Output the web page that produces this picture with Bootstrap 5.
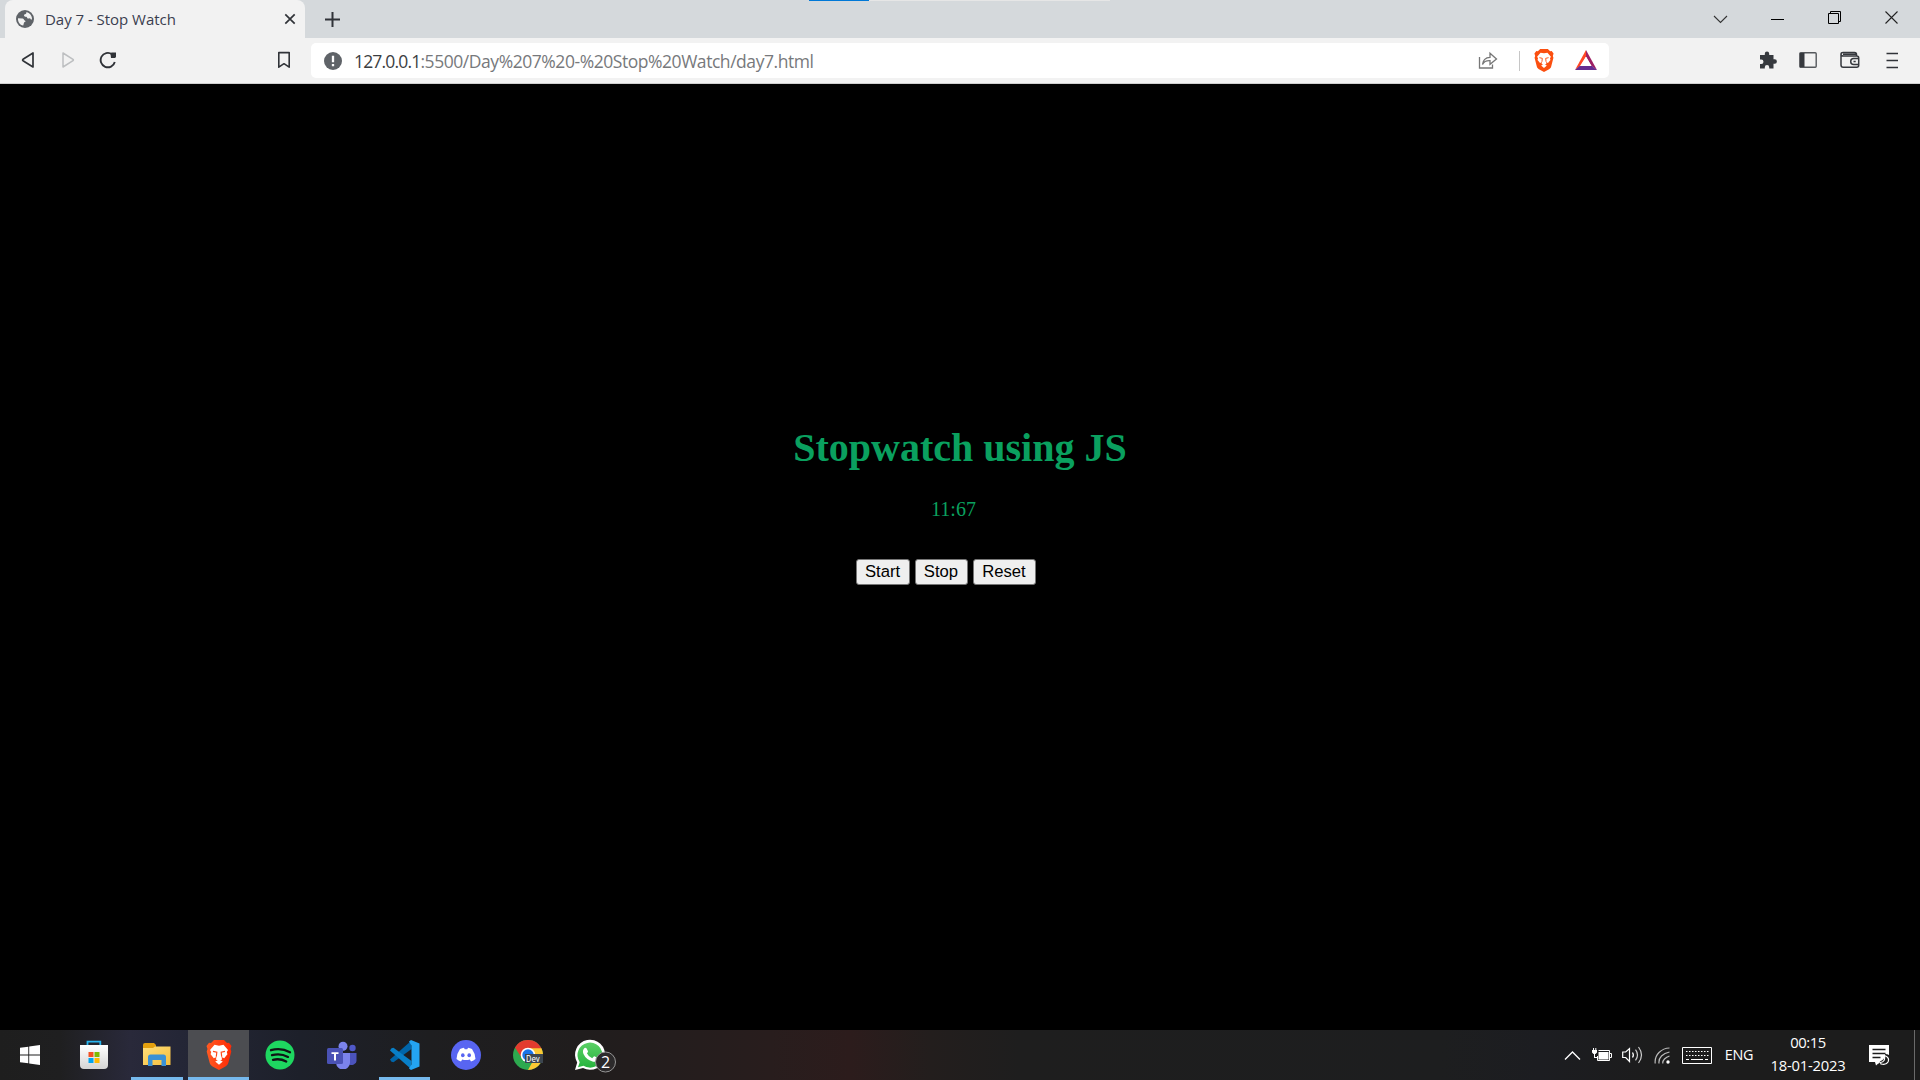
<!DOCTYPE html>
<html lang="en">
<head>
<meta charset="utf-8">
<title>Day 7 - Stop Watch</title>
<link href="https://cdn.jsdelivr.net/npm/bootstrap@5.3.0/dist/css/bootstrap.min.css" rel="stylesheet">
<style>
body{width:1920px;height:1080px;overflow:hidden;background:#000;font-family:"Open Sans","Noto Sans",sans-serif}
svg{display:block;flex:none}
.cell{display:flex;align-items:center;justify-content:center;flex:none;height:100%}
.w30{width:30px}.w40{width:40px}.w41{width:41px}.w42{width:42px}.w44{width:44px}.w50{width:50px}.w57{width:57px}.w62{width:62px}.w94{width:94px}
.tabstrip{height:38px;background:#d5d9dc}
.tab{width:300px;height:38px;margin-left:5px;border-radius:8px 8px 0 0;background:#f2f2f2;padding:0 9px 0 11px}
.tab-title{font-size:15px;color:#3b3e4f;letter-spacing:-.03px;line-height:37px;margin-left:11px;white-space:nowrap}
.loadbar{left:809px;top:0;width:301px;height:1px;background:#e6e6e6}
.loadbar div{width:60px;height:1px;background:#0078d7}
.toolbar{height:46px;background:#f2f2f2;border-bottom:1px solid #d0d0d0}
.toolbar>div>.cell{padding-bottom:1px}
.nav-left{width:304px;padding-left:8px}
.address{width:1298px;height:35px;margin:5px 0 0 7px;background:#fff;border-radius:5px;padding:0 2px 0 13px}
.url{font-size:17.500px;letter-spacing:-.45px;color:#77797c;margin-left:12px;line-height:34px}
.url span{color:#3b3e42;letter-spacing:-.82px}
.sep{width:1px;height:20px;background:#c6c6c6;margin:0 3px 0 12px}
.page{height:946px;background:#000;font-family:"Liberation Serif",serif;color:#0aa05f;padding-top:341px}
.page h1{font-size:40px;font-weight:700;line-height:46px}
.time{font-size:20px;line-height:23px;margin:27px 13px 0 0}
.btns{gap:5px;margin:38px 29px 0 0}
.btns button{height:26px;width:54px;border:1px solid #767676;border-radius:3px;background:#efefef;color:#000;font:16.67px/22px "Liberation Sans",sans-serif;padding:1px 0}
.btns button:nth-child(2){width:53px}
.btns button:last-child{width:63px}
.taskbar{height:50px;color:#fff;background:linear-gradient(90deg,#1e1e1e 0,#1f1f20 60px,#29293a 130px,#242636 180px,#1d202a 300px,#1e1e20 430px,#201d1d 580px,#281d1d 770px,#2c1c1c 850px,#231e1d 930px,#1e1e1e 1020px,#1d1e1f 1440px,#1c1d21 1540px,#1c1c1c 1660px)}
.open{position:relative}
.open::after{content:"";position:absolute;left:6px;right:5px;bottom:0;height:3px;background:#76b9ed}
.active{background:#4c4d51;width:61px}
.active::after{left:0;right:0}
.lang{font-size:14.4px;letter-spacing:-.3px}
.clock{font-size:14.8px;line-height:23px;text-align:center;letter-spacing:-.2px;padding-bottom:2px}
.clock .hr-time{letter-spacing:-.4px}
.desk{width:1px;height:50px;background:#6a6a6a;margin:0 5px 0 9px}
</style>
<script src="https://cdn.jsdelivr.net/npm/bootstrap@5.3.0/dist/js/bootstrap.bundle.min.js"></script>
</head>
<body class="d-flex flex-column m-0">
<svg width="0" height="0" class="position-absolute">
<defs>
<linearGradient id="bg" x1="0" x2="1"><stop offset="0" stop-color="#ff5a22"/><stop offset="1" stop-color="#ff2a05"/></linearGradient>
<linearGradient id="fold" x1="0" y1="0" x2="1" y2="1"><stop offset="0" stop-color="#ffdf7a"/><stop offset="1" stop-color="#f5bd3c"/></linearGradient>
<linearGradient id="sb" x2="0" y2="1"><stop offset="0" stop-color="#fff"/><stop offset="1" stop-color="#d4d4d4"/></linearGradient>
<linearGradient id="wa" x2="0" y2="1"><stop offset="0" stop-color="#5bd066"/><stop offset="1" stop-color="#27b43e"/></linearGradient>
<symbol id="lion" viewBox="0 0 26 30">
<path d="M8 0h10l3 3 2-.3L25.500 6l-1 3 .8 2.500-3 11.500c-.6 1.800-1.600 2.600-3.300 3.700L13 30l-6-3.300C5.300 25.600 4.300 24.800 3.700 23L.7 11.500 1.500 9 .5 6 3 2.700 5 3z"/>
<path fill="#fff" d="M8.500 4.800l4.500.9 4.500-.9 4.500 5.200-1.200 2 .6 2.300-3.200 3.900-2.700-1.200.6 2.500-3.100 1.500-3.100-1.500.6-2.500-2.700 1.200-3.200-3.900.6-2.300L4 10zM13 19.800l3.800 1.700-3.800 3.200-3.800-3.200z"/>
<path fill="none" stroke="currentColor" stroke-width="1.200" d="M7 11.300l3.800.9-.5 4.500M19 11.300l-3.800.9.5 4.500"/>
</symbol>
</defs>
</svg>

<header class="tabstrip d-flex">
  <div class="tab d-flex align-items-center">
    <svg width="18" height="18" viewBox="0 0 18 18"><circle cx="9" cy="9" r="9" fill="#5f6368"/><path fill="#f2f2f2" d="M2 8.200l4.800.3c1.500.4 1 2 2.300 2.300.8.300.5 1.200-.5 1.300-.9.300-.6 2-1.400 3.500C3.800 14.800 1.700 11.800 2 8.200zM10.500 2l-.3 1.600c-.5 1.200-2 .5-2.200 1.700-.1 1 1 1.700 2.300 1.500.9 0 .5 1.500 1.700 1.800 1 .1 1.300-.6 2-.3.8.5.5 1.500 1.500 1.300.4-.1.500-.4.500-.8 0-3.200-2.300-6-5.500-6.800z"/></svg>
    <span class="tab-title">Day 7 - Stop Watch</span>
    <svg class="ms-auto" width="12" height="12" viewBox="0 0 12 12"><path d="M1.300 1.300l9.400 9.400M10.700 1.300L1.300 10.700" stroke="#303338" stroke-width="1.700"/></svg>
  </div>
  <div class="cell" style="width:55px"><svg width="15" height="15" viewBox="0 0 15 15"><path d="M7.500 0v15M0 7.500h15" stroke="#303338" stroke-width="2"/></svg></div>
  <div class="d-flex ms-auto">
    <div class="cell w57"><svg width="15" height="9" viewBox="0 0 15 9"><path d="M1 1l6.500 6.500L14 1" fill="none" stroke="#333" stroke-width="1.100"/></svg></div>
    <div class="cell w57"><svg width="13" height="1"><path d="M0 .5h13" stroke="#000"/></svg></div>
    <div class="cell w57 pb-1"><svg width="13" height="13" viewBox="0 0 13 13"><path d="M.5 2.500h10v10H.5zM2.500 2.500v-2h10v10h-2" fill="none" stroke="#000"/></svg></div>
    <div class="cell w57 pb-1"><svg width="13" height="13" viewBox="0 0 13 13"><path d="M.5.5l12 12M12.500.5l-12 12" stroke="#222" stroke-width="1.100"/></svg></div>
  </div>
</header>
<div class="loadbar position-absolute"><div></div></div>

<nav class="toolbar d-flex">
  <div class="nav-left d-flex">
    <div class="cell w40"><svg width="14" height="18" viewBox="0 0 14 18"><path d="M12 2v14L2 9.700Q1.200 9 2 8.300z" fill="none" stroke="#303338" stroke-width="1.700" stroke-linejoin="round"/></svg></div>
    <div class="cell w40"><svg width="14" height="18" viewBox="0 0 14 18"><path d="M2 2v14l10-6.300q.8-.7 0-1.400z" fill="none" stroke="#bdbfc1" stroke-width="1.500" stroke-linejoin="round"/></svg></div>
    <div class="cell w40"><svg width="18" height="18" viewBox="0 0 18 18"><path d="M13 3.200A7.200 7.200 0 1 0 15.800 11" fill="none" stroke="#303338" stroke-width="1.900"/><path d="M11.500 2.500l1-1h4.500v4.500l-1 1h-4z" fill="#303338"/></svg></div>
    <div class="cell w40 ms-auto"><svg width="14" height="18" viewBox="0 0 14 18"><path d="M1.800 1.600h10.400v14.600L7 12.700l-5.200 3.500z" fill="none" stroke="#303338" stroke-width="1.600" stroke-linejoin="round"/></svg></div>
  </div>
  <div class="address d-flex align-items-center">
    <svg width="18" height="18" viewBox="0 0 18 18"><circle cx="9" cy="9" r="9" fill="#5f6368"/><path d="M9 3.800v6.400M9 12v2.300" stroke="#fff" stroke-width="2.300"/></svg>
    <div class="url text-nowrap"><span>127.0.0.1</span>:5500/Day%207%20-%20Stop%20Watch/day7.html</div>
    <div class="cell w41 ms-auto"><svg width="20" height="18" viewBox="0 0 20 18"><path d="M1.500 6v11h13v-3.500M4.500 13.500C5 8.500 8 6.500 12 6.300V2.200L18.500 8 12 13.300V9.700C8.500 9.500 6 10.500 4.500 13.500z" fill="none" stroke="#777" stroke-width="1.300"/></svg></div>
    <div class="sep" style="margin-left:11px"></div>
    <div class="cell w42"><svg width="20" height="23" viewBox="0 0 20 23" fill="#fb4f10" color="#fb4f10"><use href="#lion" width="20" height="23"/></svg></div>
    <div class="cell w42"><svg width="22" height="20" viewBox="0 0 22 20"><path fill="#ff4724" d="M11 0v6.500L5 16 0 20z"/><path fill="#9e1f63" d="M11 0l11 20-5.500-4L11 6.500z"/><path fill="#662d91" d="M0 20l4.500-4h12.500l5 4z"/><path fill="#fff" d="M11 6.800L5.600 16h10.800z"/></svg></div>
  </div>
  <div class="d-flex ms-auto pe-2">
    <div class="cell w40"><svg width="18" height="18" viewBox="0 0 18 18"><path fill="#36393e" d="M1 4h4.800V2.700a2.200 2.200 0 0 1 4.400 0V4H14.500v4.300h1.200a2.200 2.200 0 0 1 0 4.400h-1.200V17.500h-4.300v-1.300a2.200 2.200 0 0 0-4.400 0v1.300H1v-4.600h1.300a2.200 2.200 0 0 0 0-4.400H1z"/></svg></div>
    <div class="cell w40"><svg width="18" height="16" viewBox="0 0 18 16"><rect x=".8" y=".8" width="16.400" height="14.400" rx="1" fill="none" stroke="#55585c" stroke-width="1.400"/><path d="M1 1h4.500v14H1z" fill="#36393e"/></svg></div>
    <div class="cell w44"><svg width="20" height="18" viewBox="0 0 20 18"><path d="M1 3v11q0 2.300 2.300 2.300h13.400q2 0 2-2V7q0-2-2-2H3.500Q1 5 1 3.200 1 1.500 3 1.500h11.500q2 0 2 2V5M3 3.300h13M18.700 7.500h-5a3 3 0 0 0 0 6h5zM13.500 10.500h2.200" fill="none" stroke="#36393e" stroke-width="1.500"/></svg></div>
    <div class="cell w40"><svg width="12" height="17" viewBox="0 0 12 17"><path d="M.5 1.500H12M.5 8.500H12M.5 15.500H12" stroke="#303338" stroke-width="1.700"/></svg></div>
  </div>
</nav>

<main class="page d-flex flex-column align-items-center">
  <h1 class="m-0">Stopwatch using JS</h1>
  <div class="time">11:67</div>
  <div class="btns d-flex"><button>Start</button><button>Stop</button><button>Reset</button></div>
</main>

<footer class="taskbar d-flex">
  <div class="cell" style="width:60px"><svg width="20" height="20" viewBox="0 0 20 20"><path fill="#fff" d="M0 2.800l8.300-1.100v7.800H0zM9.200 1.500L20 0v9.500H9.200zM0 10.400h8.300v7.900L0 17.200zM9.200 10.400H20V20L9.200 18.400z"/></svg></div>
  <div class="cell" style="width:65px;padding-left:2px"><svg width="30" height="30" viewBox="0 0 30 30"><path d="M8.500 6V1.700h12.800V6" fill="none" stroke="#28b4ee" stroke-width="1.800"/><path d="M1 5h28v20q0 4-4 4H5q-4 0-4-4z" fill="url(#sb)"/><path fill="#f25022" d="M9.500 12h5v5h-5z"/><path fill="#7fba00" d="M15.500 12h5v5h-5z"/><path fill="#00a4ef" d="M9.500 18h5v5h-5z"/><path fill="#ffb900" d="M15.500 18h5v5h-5z"/></svg></div>
  <div class="cell w62 open" style="width:63px"><svg width="28" height="26" viewBox="0 0 28 26"><path d="M0 3q0-2 2-2h9l2 2v4H0z" fill="#e4a00e"/><path d="M0 6h10l2-1.500h15.500V23H0z" fill="url(#fold)"/><path d="M5 24V15q0-2.500 2.500-2.500h13q2.500 0 2.500 2.500v9h-4.500v-6h-9v6z" fill="#3b91d5"/></svg></div>
  <div class="cell open active"><svg width="26" height="30" viewBox="0 0 26 30" fill="url(#bg)" color="#ff4a1c"><use href="#lion" width="26" height="30"/></svg></div>
  <div class="cell w62"><svg width="30" height="30" viewBox="0 0 30 30"><circle cx="15" cy="15" r="14.500" fill="#1ed760"/><path d="M6 10.200q10-2.800 19 2M7 15.200q8.500-2.300 16 1.700M8 19.800q7-1.700 13.200 1.700" fill="none" stroke="#101415" stroke-width="2.300" stroke-linecap="round"/></svg></div>
  <div class="cell w62"><svg width="30" height="28" viewBox="0 0 30 28"><circle cx="25.500" cy="7" r="3.200" fill="#5059c9"/><path d="M20 12h9.500v8a5 5 0 0 1-8 3z" fill="#4b53bc"/><circle cx="16" cy="5.200" r="4.500" fill="#7b83eb"/><path d="M8 12h15v9a7 7 0 0 1-14 1z" fill="#7b83eb"/><rect y="7" width="16" height="16" rx="1.500" fill="#4a52b5"/><path d="M4.500 11.300h7v1.800H9v6.500H7v-6.500H4.500z" fill="#fff"/></svg></div>
  <div class="cell w62 open"><svg width="31" height="30" viewBox="0 0 31 30"><path d="M22 1L1 19.500l1.500 2.300 2 .5L22.500 9z" fill="#0065a9"/><path d="M22 29L1 10.500l1.500-2.300 2-.5L22.500 21z" fill="#087fc8"/><path d="M22 0l8.500 3.500v23L22 30l-2-1.500 2.500-4V5.500L20 1.500z" fill="#24a4f2"/></svg></div>
  <div class="cell w62"><svg width="30" height="30" viewBox="0 0 30 30"><circle cx="15" cy="15" r="15" fill="#5865f2"/><path fill="#fff" d="M9 9q2-1 4-1.200l.7 1.400h2.600l.7-1.400Q19 8 21 9q3.500 5 3.500 10-2 1.700-4.500 2.400l-1.200-2q-3.800 1.100-7.600 0l-1.200 2Q7.500 20.700 5.500 19 5.500 14 9 9z"/><ellipse cx="11.800" cy="15.200" rx="1.800" ry="2" fill="#5865f2"/><ellipse cx="18.200" cy="15.200" rx="1.800" ry="2" fill="#5865f2"/></svg></div>
  <div class="cell w62"><svg width="30" height="30" viewBox="0 0 30 30"><circle cx="15" cy="15" r="15" fill="#2da94f"/><path d="M2 7.500A15 15 0 0 1 28 7.500L28.300 9H15L9 18.500z" fill="#e33b2e"/><path d="M15 8.200h13.400A15 15 0 0 1 15 30l6-11z" fill="#fcc934"/><circle cx="15" cy="15" r="7.300" fill="#fff"/><circle cx="15" cy="15" r="5.700" fill="#1a73e8"/><rect x="12" y="14" width="18" height="9" fill="#3c4650"/><text x="13" y="21.500" font-family="Roboto" font-size="8.300" fill="#fff">Dev</text></svg></div>
  <div class="cell w62 ps-2"><svg width="44" height="36" viewBox="0 0 44 36"><g transform="translate(3 3)"><path d="M0 30l2.200-7.500A15 15 0 1 1 8 28z" fill="#fff"/><path d="M3 27.200l1.700-5A12.500 12.500 0 1 1 8.500 25.800z" fill="url(#wa)"/><path d="M9.500 8q1-.8 2 .2l1.500 3q.2.900-1.100 2 1.700 3.700 5.300 5 1.600-2 2.100-2l3.300 1.600q.8.700-.3 2.600-1.800 2-4.800 1.100Q11 19.500 8.500 14 7 10.500 9.500 8z" fill="#fff"/></g><circle cx="33.500" cy="25" r="10" fill="#2c2a2b" stroke="#969696"/><text x="33.500" y="31" text-anchor="middle" font-family="Open Sans" font-size="16" fill="#fff">2</text></svg></div>

  <div class="d-flex ms-auto">
    <div class="cell w30"><svg width="17" height="11" viewBox="0 0 17 11"><path d="M1 9.500L8.500 2 16 9.500" fill="none" stroke="#fff" stroke-width="1.300"/></svg></div>
    <div class="cell w30"><svg width="20" height="14" viewBox="0 0 20 14"><path d="M6.500 2.500h11v10h-12V8M18 5.500h1.500v4H18" fill="none" stroke="#fff"/><path d="M6.500 4h10v7.500h-10zM0 2h5v2.500L3.500 6h-2L0 4.500zM1 0h1v2H1zM3.300 0h1v2h-1zM2 6h1v3h3v1H2z" fill="#fff"/></svg></div>
    <div class="cell w30"><svg width="21" height="18" viewBox="0 0 21 18"><path d="M.7 6v5.500h3L7.500 15.500V2.500L3.700 6z" fill="none" stroke="#fff" stroke-width="1.200"/><path d="M10.500 6.500q1.700 2.500 0 5" fill="none" stroke="#fff" stroke-width="1.300"/><path d="M13.500 3.700q4 5.200 0 10.600M16.500 1q6 8 0 16" fill="none" stroke="#ccc" stroke-width="1.200"/></svg></div>
    <div class="cell w30"><svg width="16" height="17" viewBox="0 0 16 17"><path d="M1.200 16.500Q.5 10 5 5.500T15.500 1M5 16.500Q4.500 12 7.500 9t8-4M8.800 16.500Q8.500 14 10.500 12t5-3" fill="none" stroke="#bbb" stroke-width="1.200"/><circle cx="14" cy="15" r="1.700" fill="#fff"/></svg></div>
    <div class="cell w40"><svg width="30" height="17" viewBox="0 0 30 17"><path d="M.5.5h29v16H.5z" fill="none" stroke="#fff"/><path d="M4 4.500h23M4 8.500h23" stroke="#fff" stroke-dasharray="1.500 1.500"/><path d="M4 12.500h3M9 12.500h12M23 12.500h3" stroke="#fff"/></svg></div>
    <div class="cell w44 lang">ENG</div>
    <div class="cell w94 flex-column clock"><div class="hr-time">00:15</div><div>18-01-2023</div></div>
    <div class="cell" style="width:48px"><svg width="22" height="21" viewBox="0 0 22 21"><path d="M1 0h20v10q-1.500-1-4-1 1 5-5 7.500l-1 2L7 17H1z" fill="#fff"/><path d="M7 17h5l-4 3.500z" fill="#fff"/><path d="M4.500 4.500h13M4.500 8.500h13M4.500 12.500h8" stroke="#1c1c1c" stroke-width="1.300"/><path d="M16.500 10.500q5.500 2 3.500 6.500-2 3.500-7 2l-.5-1.500q5-.5 4-7z" fill="#1c1c1c" stroke="#fff" stroke-width="1.200"/></svg></div>
    <div class="desk" style="margin-left:11px"></div>
  </div>
</footer>
</body>
</html>
